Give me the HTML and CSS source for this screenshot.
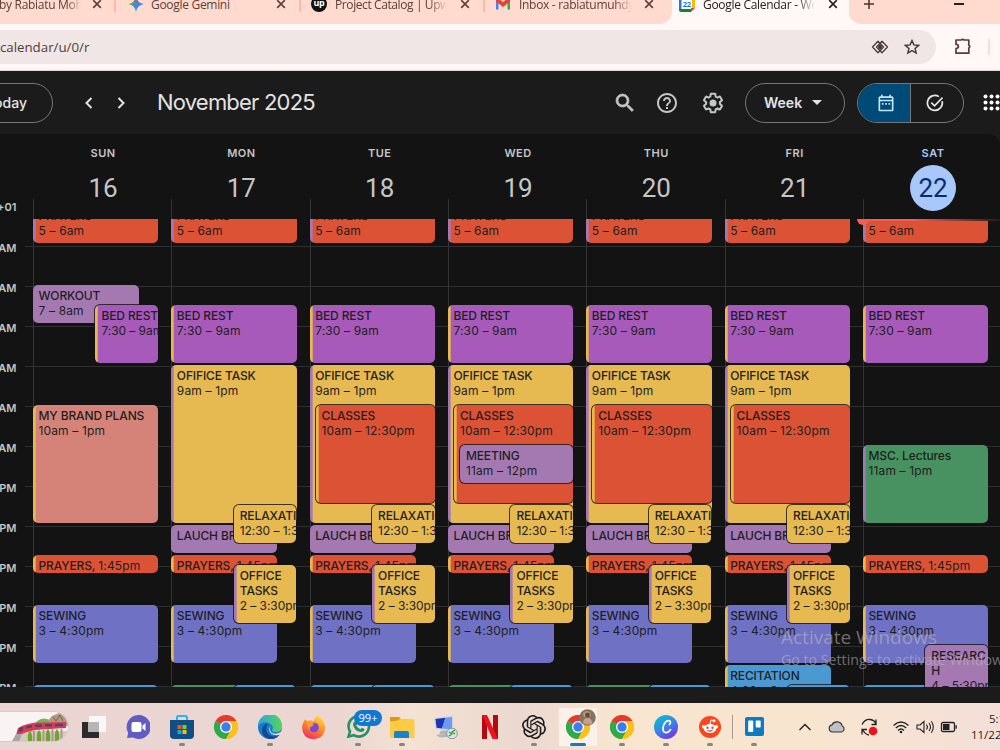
FILE: index.html
```html
<!DOCTYPE html>
<html lang="en">
<head>
<meta charset="utf-8">
<title>Google Calendar - Week of November 16, 2025</title>
<link rel="stylesheet" href="styles.css">
</head>
<body>
<svg width="0" height="0" class="defs">
  <symbol id="x" viewBox="0 0 10 10"><path d="M1.2 1.2l7.6 7.6M8.8 1.2L1.2 8.8" stroke="currentColor" stroke-width="1.7" fill="none"/></symbol>
  <symbol id="chrome" viewBox="0 0 24 24">
    <circle cx="12" cy="12" r="12" fill="#fbc116"/>
    <path d="M12 12L1.6 6A12 12 0 0 1 22.4 6z" fill="#e33b2e"/>
    <path d="M1.6 6A12 12 0 0 0 12 24l5-9.2L12 12z" fill="#2da94f"/>
    <path d="M12 6h10.4A12 12 0 0 1 12 24l5.2-9z" fill="#fbc116"/>
    <circle cx="12" cy="12" r="6" fill="#fff"/><circle cx="12" cy="12" r="4.7" fill="#3b7ded"/>
  </symbol>
</svg>
<div class="screen">
  <header class="tabs">
    <div class="tab t1"><span class="tt">by Rabiatu Moham</span><svg class="close"><use href="#x"/></svg></div>
    <div class="tab t2"><svg class="fav" viewBox="0 0 16 16"><defs><linearGradient id="gm" x1="0" y1=".2" x2="1" y2=".6"><stop offset="0" stop-color="#f7c32e"/><stop offset=".3" stop-color="#4cae66"/><stop offset=".55" stop-color="#3b86f6"/><stop offset="1" stop-color="#3b86f6"/></linearGradient></defs><path d="M8 0Q9 7 16 8Q9 9 8 16Q7 9 0 8Q7 7 8 0z" fill="url(#gm)"/><path d="M8 0Q8.600 4.800 10.500 6L5.500 6Q7.400 4.800 8 0z" fill="#ea4a3c"/></svg><span class="tt">Google Gemini</span><svg class="close"><use href="#x"/></svg></div>
    <div class="tab t3"><span class="up">up</span><span class="tt">Project Catalog | Upwork</span><svg class="close"><use href="#x"/></svg></div>
    <div class="tab t4"><svg class="fav" viewBox="0 0 16 16"><path d="M1 13.500V3.500L3.500 4V13.500z" fill="#4285f4"/><path d="M12.500 13.500V4L15 3.500V13.500z" fill="#34a853"/><path d="M1 3.500Q2 1.500 4 3L8 6L12 3Q14 1.500 15 3.500V5.500L8 11L1 5.500z" fill="#ea4335"/></svg><span class="tt">Inbox - rabiatumuhdy@</span><svg class="close"><use href="#x"/></svg></div>
    <div class="tab t5"><svg class="fav" viewBox="0 0 16 16"><path d="M0 0h16v16H0z" fill="#fff"/><path d="M0 0h13v3H0zM0 3h2.500v10H0z" fill="#2b72e8"/><path d="M13 0h3v12h-3z" fill="#fbbc04"/><path d="M0 13h12v3H2Q0 16 0 14z" fill="#188038"/><path d="M12 12h4l-4 4z" fill="#ea4335"/><text x="7.800" y="11.200" class="favn">22</text></svg><span class="tt">Google Calendar - Week</span><svg class="close"><use href="#x"/></svg></div>
    <div class="tabend"><svg width="12" height="12" viewBox="0 0 12 12"><path d="M6 1v10M1 6h10" stroke="#49322c" stroke-width="1.500"/></svg><i></i></div>
  </header>
  <div class="bar">
    <div class="omni"><span>/calendar/u/0/r</span>
      <svg width="18" height="14" viewBox="0 0 18 14"><g fill="none" stroke="#4a3b38" stroke-width="1.300" stroke-linejoin="round"><path d="M7 1.200L1.500 7L7 12.800L12.500 7z"/><path d="M11 1.200L5.500 7L11 12.800L16.500 7z"/></g><path d="M9 4L11.500 7L9 10L6.500 7z" fill="#4a3b38"/></svg>
      <svg width="16" height="16" viewBox="0 0 16 16"><path d="M8 1.600l1.900 4.300 4.700.5-3.500 3.100 1 4.600L8 11.700l-4.100 2.400 1-4.600L1.400 6.400l4.700-.5z" fill="none" stroke="#4a3b38" stroke-width="1.500"/></svg>
    </div>
    <svg class="ext" width="18" height="18" viewBox="0 0 18 18"><path d="M2 3h5.200a1.600 1.400 0 0 1 2.800 0h4.800v5.200a1.500 1.500 0 0 1 0 2.800v5.200H2v-4.700q2.400-.3 2.400-2.100T2 7.400z" fill="none" stroke="#5a3a33" stroke-width="1.700" stroke-linejoin="round"/></svg>
    <i class="vline"></i>
  </div>
  <div class="app">
    <div class="apphead">
      <div class="pill today">Today</div>
      <svg class="nav n1" width="10" height="14" viewBox="0 0 10 14"><path d="M7.500 2L2.500 7l5 5" /></svg>
      <svg class="nav n2" width="10" height="14" viewBox="0 0 10 14"><path d="M2.500 2l5 5l-5 5"/></svg>
      <h1>November 2025</h1>
      <svg class="ic i1" viewBox="0 0 24 24"><path d="M15.500 14h-.790l-.280-.270A6.471 6.471 0 0 0 16 9.500 6.500 6.500 0 1 0 9.500 16c1.610 0 3.090-.590 4.230-1.570l.270.280v.790l5 4.990L20.490 19l-4.990-5zm-6 0C7.010 14 5 11.990 5 9.500S7.010 5 9.500 5 14 7.010 14 9.500 11.990 14 9.500 14z"/></svg>
      <svg class="ic i2" viewBox="0 0 24 24"><path d="M11 18h2v-2h-2v2zm1-16C6.480 2 2 6.480 2 12s4.480 10 10 10 10-4.480 10-10S17.520 2 12 2zm0 18c-4.410 0-8-3.590-8-8s3.590-8 8-8 8 3.590 8 8-3.590 8-8 8zm0-14c-2.210 0-4 1.790-4 4h2c0-1.100.9-2 2-2s2 .9 2 2c0 2-3 1.750-3 5h2c0-2.250 3-2.500 3-5 0-2.210-1.790-4-4-4z"/></svg>
      <svg class="ic i3" viewBox="0 0 24 24"><path d="M13.850 22.250h-3.700c-.740 0-1.360-.540-1.450-1.270l-.270-1.890c-.270-.140-.530-.290-.790-.460l-1.800.720c-.7.260-1.470-.030-1.810-.650L2.200 15.530c-.350-.660-.200-1.440.360-1.880l1.530-1.190c-.010-.150-.020-.300-.020-.460 0-.150.010-.310.020-.460l-1.520-1.190c-.590-.450-.740-1.260-.370-1.880l1.850-3.190c.340-.620 1.110-.9 1.790-.630l1.810.730c.260-.170.520-.320.780-.460l.270-1.910c.090-.7.710-1.250 1.440-1.250h3.700c.740 0 1.360.540 1.450 1.270l.270 1.890c.270.140.530.290.790.460l1.800-.720c.710-.260 1.480.030 1.820.650l1.840 3.180c.360.660.200 1.440-.360 1.880l-1.520 1.190c.010.150.020.300.020.460s-.010.310-.020.460l1.520 1.190c.560.450.720 1.230.370 1.860l-1.860 3.220c-.340.620-1.110.9-1.800.630l-1.800-.720c-.260.170-.520.320-.780.460l-.270 1.910c-.100.680-.720 1.220-1.460 1.220zm-3.230-2h2.760l.370-2.550.530-.220c.440-.180.880-.440 1.340-.780l.450-.340 2.380.960 1.380-2.400-2.030-1.580.070-.560c.030-.260.060-.510.060-.780s-.030-.530-.060-.780l-.070-.560 2.030-1.580-1.390-2.400-2.390.960-.450-.350c-.420-.320-.870-.580-1.330-.770l-.520-.220-.370-2.550h-2.760l-.370 2.550-.530.210c-.440.190-.880.440-1.340.790l-.450.330-2.380-.950-1.390 2.390 2.030 1.580-.070.560a7 7 0 0 0-.060.790c0 .260.020.530.060.780l.070.560-2.030 1.580 1.380 2.400 2.390-.960.450.350c.430.330.860.580 1.330.770l.530.220z"/><circle cx="12" cy="12" r="3.500"/></svg>
      <div class="pill week">Week<i></i></div>
      <div class="pill modes">
        <div class="m on"><svg width="20" height="20" viewBox="0 0 24 24" fill="#c2e7ff"><path d="M19 4h-1V2h-2v2H8V2H6v2H5c-1.110 0-2 .9-2 2v14c0 1.100.890 2 2 2h14c1.100 0 2-.9 2-2V6c0-1.100-.9-2-2-2zm0 16H5V10h14v10zm0-12H5V6h14v2zM7 12h2v2H7zm4 0h2v2h-2zm4 0h2v2h-2z"/></svg></div>
        <div class="m"><svg width="20" height="20" viewBox="0 0 24 24" fill="none" stroke="#e3e3e3" stroke-width="2"><path d="M20.600 9.800A9 9 0 1 1 16.700 4.300M7.500 11.500l4 4L21 5.500"/></svg></div>
      </div>
      <svg class="apps" width="18" height="18" viewBox="0 0 18 18" fill="#fff"><g id="dr"><circle cx="2.500" cy="2.500" r="2"/><circle cx="8.500" cy="2.500" r="2"/><circle cx="14.500" cy="2.500" r="2"/></g><use href="#dr" y="6"/><use href="#dr" y="12"/></svg>
    </div>
    <div class="cal">
      <div class="days">
        <div class="gmt"><span>GMT+01</span></div>
        <div class="day"><b>SUN</b><em>16</em></div><div class="day"><b>MON</b><em>17</em></div><div class="day"><b>TUE</b><em>18</em></div><div class="day"><b>WED</b><em>19</em></div><div class="day"><b>THU</b><em>20</em></div><div class="day"><b>FRI</b><em>21</em></div><div class="day now"><b>SAT</b><em>22</em></div>
      </div>
      <div class="scroll">
        <div class="hours"><span>6 AM</span><span>7 AM</span><span>8 AM</span><span>9 AM</span><span>10 AM</span><span>11 AM</span><span>12 PM</span><span>1 PM</span><span>2 PM</span><span>3 PM</span><span>4 PM</span><span>5 PM</span></div>
        <div class="col">
          <div class="ev or bp" style="--s:1;--n:4"><b>PRAYERS</b><span>5 – 6am</span></div>
          <div class="ev lp w85" style="--s:9;--n:4"><b>WORKOUT</b><span>7 – 8am</span></div>
          <div class="ev pu by half" style="--s:11;--n:6"><b>BED REST</b><span>7:30 – 9am</span></div>
          <div class="ev sa by" style="--s:21;--n:12"><b>MY BRAND PLANS</b><span>10am – 1pm</span></div>
          <div class="ev or by" style="--s:36;--n:2"><b>PRAYERS, <span>1:45pm</span></b></div>
          <div class="ev vi by" style="--s:41;--n:6"><b>SEWING</b><span>3 – 4:30pm</span></div>
          <div class="ev bl" style="--s:49;--n:4"></div>
        </div>
        <div class="col">
          <div class="ev or bp" style="--s:1;--n:4"><b>PRAYERS</b><span>5 – 6am</span></div>
          <div class="ev pu by" style="--s:11;--n:6"><b>BED REST</b><span>7:30 – 9am</span></div>
          <div class="ev ye bp" style="--s:17;--n:16"><b>OFIFICE TASK</b><span>9am – 1pm</span></div>
          <div class="ev lp w85" style="--s:33;--n:3"><b>LAUCH BREAK</b></div>
          <div class="ev ye half" style="--s:31;--n:4"><b>RELAXATION</b><span>12:30 – 1:30pm</span></div>
          <div class="ev or by w85" style="--s:36;--n:2"><b>PRAYERS, <span>1:45pm</span></b></div>
          <div class="ev vi by w85" style="--s:41;--n:6"><b>SEWING</b><span>3 – 4:30pm</span></div>
          <div class="ev ye bp half" style="--s:37;--n:6"><b>OFFICE<br>TASKS</b><span>2 – 3:30pm</span></div>
          <div class="ev gr w85" style="--s:49;--n:4"></div><div class="ev bl half" style="--s:49;--n:4"></div>
        </div>
        <div class="col">
          <div class="ev or bp" style="--s:1;--n:4"><b>PRAYERS</b><span>5 – 6am</span></div>
          <div class="ev pu by" style="--s:11;--n:6"><b>BED REST</b><span>7:30 – 9am</span></div>
          <div class="ev ye bp" style="--s:17;--n:16"><b>OFIFICE TASK</b><span>9am – 1pm</span></div>
          <div class="ev or by in1" style="--s:21;--n:10"><b>CLASSES</b><span>10am – 12:30pm</span></div>
          <div class="ev lp w85" style="--s:33;--n:3"><b>LAUCH BREAK</b></div>
          <div class="ev ye half" style="--s:31;--n:4"><b>RELAXATION</b><span>12:30 – 1:30pm</span></div>
          <div class="ev or by w85" style="--s:36;--n:2"><b>PRAYERS, <span>1:45pm</span></b></div>
          <div class="ev vi by w85" style="--s:41;--n:6"><b>SEWING</b><span>3 – 4:30pm</span></div>
          <div class="ev ye bp half" style="--s:37;--n:6"><b>OFFICE<br>TASKS</b><span>2 – 3:30pm</span></div>
          <div class="ev bl w85" style="--s:49;--n:4"></div><div class="ev bl half" style="--s:49;--n:4"></div>
        </div>
        <div class="col">
          <div class="ev or bp" style="--s:1;--n:4"><b>PRAYERS</b><span>5 – 6am</span></div>
          <div class="ev pu by" style="--s:11;--n:6"><b>BED REST</b><span>7:30 – 9am</span></div>
          <div class="ev ye bp" style="--s:17;--n:16"><b>OFIFICE TASK</b><span>9am – 1pm</span></div>
          <div class="ev or by in1" style="--s:21;--n:10"><b>CLASSES</b><span>10am – 12:30pm</span></div>
          <div class="ev lp in2" style="--s:25;--n:4"><b>MEETING</b><span>11am – 12pm</span></div>
          <div class="ev lp w85" style="--s:33;--n:3"><b>LAUCH BREAK</b></div>
          <div class="ev ye half" style="--s:31;--n:4"><b>RELAXATION</b><span>12:30 – 1:30pm</span></div>
          <div class="ev or by w85" style="--s:36;--n:2"><b>PRAYERS, <span>1:45pm</span></b></div>
          <div class="ev vi by w85" style="--s:41;--n:6"><b>SEWING</b><span>3 – 4:30pm</span></div>
          <div class="ev ye bp half" style="--s:37;--n:6"><b>OFFICE<br>TASKS</b><span>2 – 3:30pm</span></div>
          <div class="ev gr w85" style="--s:49;--n:4"></div><div class="ev bl half" style="--s:49;--n:4"></div>
        </div>
        <div class="col">
          <div class="ev or bp" style="--s:1;--n:4"><b>PRAYERS</b><span>5 – 6am</span></div>
          <div class="ev pu by" style="--s:11;--n:6"><b>BED REST</b><span>7:30 – 9am</span></div>
          <div class="ev ye bp" style="--s:17;--n:16"><b>OFIFICE TASK</b><span>9am – 1pm</span></div>
          <div class="ev or by in1" style="--s:21;--n:10"><b>CLASSES</b><span>10am – 12:30pm</span></div>
          <div class="ev lp w85" style="--s:33;--n:3"><b>LAUCH BREAK</b></div>
          <div class="ev ye half" style="--s:31;--n:4"><b>RELAXATION</b><span>12:30 – 1:30pm</span></div>
          <div class="ev or by w85" style="--s:36;--n:2"><b>PRAYERS, <span>1:45pm</span></b></div>
          <div class="ev vi by w85" style="--s:41;--n:6"><b>SEWING</b><span>3 – 4:30pm</span></div>
          <div class="ev ye bp half" style="--s:37;--n:6"><b>OFFICE<br>TASKS</b><span>2 – 3:30pm</span></div>
          <div class="ev gr w85" style="--s:49;--n:4"></div><div class="ev bl half" style="--s:49;--n:4"></div>
        </div>
        <div class="col">
          <div class="ev or bp" style="--s:1;--n:4"><b>PRAYERS</b><span>5 – 6am</span></div>
          <div class="ev pu by" style="--s:11;--n:6"><b>BED REST</b><span>7:30 – 9am</span></div>
          <div class="ev ye bp" style="--s:17;--n:16"><b>OFIFICE TASK</b><span>9am – 1pm</span></div>
          <div class="ev or by in1" style="--s:21;--n:10"><b>CLASSES</b><span>10am – 12:30pm</span></div>
          <div class="ev lp w85" style="--s:33;--n:3"><b>LAUCH BREAK</b></div>
          <div class="ev ye half" style="--s:31;--n:4"><b>RELAXATION</b><span>12:30 – 1:30pm</span></div>
          <div class="ev or by w85" style="--s:36;--n:2"><b>PRAYERS, <span>1:45pm</span></b></div>
          <div class="ev vi by w85" style="--s:41;--n:6"><b>SEWING</b><span>3 – 4:30pm</span></div>
          <div class="ev ye bp half" style="--s:37;--n:6"><b>OFFICE<br>TASKS</b><span>2 – 3:30pm</span></div>
          <div class="ev bl by w85" style="--s:47;--n:6"><b>RECITATION</b><span>4:30 – 6pm</span></div><div class="ev bl half" style="--s:49;--n:4"></div>
        </div>
        <div class="col">
          <div class="ev or bp" style="--s:1;--n:4"><b>PRAYERS</b><span>5 – 6am</span></div>
          <div class="ev pu by" style="--s:11;--n:6"><b>BED REST</b><span>7:30 – 9am</span></div>
          <div class="ev gr bp" style="--s:25;--n:8"><b>MSC. Lectures</b><span>11am – 1pm</span></div>
          <div class="ev or by" style="--s:36;--n:2"><b>PRAYERS, <span>1:45pm</span></b></div>
          <div class="ev vi by" style="--s:41;--n:6"><b>SEWING</b><span>3 – 4:30pm</span></div>
          <div class="ev bl w85" style="--s:49;--n:4"></div>
          <div class="ev lp half" style="--s:45;--n:6"><b>RESEARC<br>H</b><span>4 – 5:30pm</span></div>
          <i class="nowline"></i><i class="nowdot"></i>
        </div>
      </div>
    </div>
  </div>
  <footer class="task">
    <div class="search"><svg width="56" height="30" viewBox="0 0 56 30">
      <path d="M21 14Q28 3 38 8L36 16z" fill="#77b255"/><path d="M36 9l4-5 7-3 6 3 4 10H36z" fill="#b09a82"/><path d="M41 5l3 4 4-6 3 6" stroke="#75604d" fill="none"/>
      <path d="M8 19h48v11H6z" fill="#d5cabb"/><path d="M16 30q-1-9 2-11q3 3 2 11zM25 30q-1-10 2-12q3 3 2 12zM34 30q-1-11 2-13q3 3 2 13zM43 30q-1-11 2-13q3 3 2 13z" fill="#6fa52f"/><path d="M22 19v11M31.500 18v12M40.500 17v13M49.500 17v13" stroke="#a89a8a" stroke-width="2"/>
      <path d="M4 23l2-7Q16 10 30 10.500L54 10v6L30 17.500Q18 18 10 22z" fill="#d93a55"/><path d="M6 20l1.500-4 4-1-1 4zM14 14l6-1v2.500l-6 1zM23 12.500h7v2.500h-7zM33 12h7v2.500h-7zM43 11.700h8v2.500h-8z" fill="#554466"/><path d="M0 29l4-7 6 0-3 8z" fill="#a6a6aa"/>
    </svg></div>
    <div class="dock">
      <div class="app-i"><svg width="26" height="26" viewBox="0 0 26 26"><path d="M8 2h17v16H8z" fill="#f8f8f8"/><path d="M1 8h17v16H1z" fill="#2b2b2b"/><path d="M7 8h11v10H7z" fill="#b7b5b5"/></svg></div>
      <div class="app-i"><svg width="24" height="24" viewBox="0 0 24 24"><path d="M12 0a12 12 0 1 1-5 22.500L1 23l1.200-5A12 12 0 0 1 12 0z" fill="#625bc3"/><rect x="5.500" y="7" width="10" height="10" rx="2" fill="#fff"/><path d="M16.500 10.500L19.500 8v8l-3-2.500z" fill="#fff"/></svg></div>
      <div class="app-i run"><svg width="24" height="24" viewBox="0 0 24 24"><path d="M7 6V2.500Q7 1 8.500 1h7Q17 1 17 2.500V6" fill="none" stroke="#27b5ef" stroke-width="2"/><path d="M0 5h24v15q0 4-4 4H4q-4 0-4-4z" fill="#124d83"/><path d="M7.500 10h4v4h-4z" fill="#f1511b"/><path d="M12.500 10h4v4h-4z" fill="#80cc28"/><path d="M7.500 15h4v4h-4z" fill="#00adef"/><path d="M12.500 15h4v4h-4z" fill="#fbbc09"/></svg></div>
      <div class="app-i"><svg width="24" height="24"><use href="#chrome"/></svg></div>
      <div class="app-i run"><svg width="24" height="24" viewBox="0 0 24 24"><defs><linearGradient id="eg" x1="0" x2="1" y1=".3" y2=".3"><stop offset="0" stop-color="#2aa5e0"/><stop offset="1" stop-color="#58d457"/></linearGradient></defs><circle cx="12" cy="12" r="12" fill="#1a78cf"/><path d="M0 11A12 12 0 0 1 24 11Q24.500 17 18 17Q13.500 17 14.200 14.500Q16 12 13 9.500Q8 5.500 2 9z" fill="url(#eg)"/><path d="M8.500 12Q7 20 15.500 21.500Q19 21.500 22 19Q18 25 11 24Q4 22 4 15Q4.500 9 10 8.500Q8.800 9.500 8.500 12z" fill="#114a91"/><path d="M12.500 11Q10.500 17 16 18.500Q20 19.300 24.500 16L23 19.500Q17 21.500 13 18.500Q9.500 14.500 12.500 11z" fill="#e9d8d6"/></svg></div>
      <div class="app-i"><svg width="24" height="24" viewBox="0 0 24 24"><defs><linearGradient id="ff" x1=".8" y1="0" x2=".3" y2="1"><stop offset="0" stop-color="#ffe64a"/><stop offset=".5" stop-color="#ff8a25"/><stop offset="1" stop-color="#f22d62"/></linearGradient></defs><path d="M16 0q6 5 7 11q.5 8-5 11.500q-7 3-13 0Q-1 18 .5 9.500L3 4l2.500 2.500Q8 4 11 6.500q2-4 5-6.500z" fill="url(#ff)"/><circle cx="12" cy="12.500" r="4.800" fill="#7949dc"/><path d="M5 8q5-1 7 1l-2 2.500q-3 0-2 3.500q-4-2-3-7z" fill="#ff982d"/></svg></div>
      <div class="app-i run"><svg width="26" height="26" viewBox="0 0 26 26"><path d="M3.500 22.500l1.500-5A10.200 10.200 0 1 1 8.800 21.200z" fill="none" stroke="#229266" stroke-width="2.600"/><path d="M9 8q1.500-2 2.500 0l.8 2-1 1.500q1.500 2.800 4.200 3.800l1.400-1.500 2.600 1.300q0 3-3.500 3Q9 17 8 10.500 8 9 9 8z" fill="#229266"/></svg><span class="badge">99+</span></div>
      <div class="app-i run"><svg width="25" height="24" viewBox="0 0 25 24"><path d="M0 2h9l2 2v4H0z" fill="#d99a10"/><path d="M0 6q6 1 10-2h12q2.500 0 2.500 2v17H0z" fill="#fbcb45"/><path d="M4 23v-5q0-2 2-2h11q2 0 2 2v5z" fill="#1784ca"/></svg></div>
      <div class="app-i"><svg width="24" height="24" viewBox="0 0 24 24"><path d="M0 3l19-2.500v15L2 14z" fill="#cfd4dc"/><path d="M1.500 4l10-1.300L8 13.500l-5.500-.8z" fill="#1a35b8"/><path d="M11.500 2.700l6.500-.7v12.500l-10-1z" fill="#6f9af3"/><path d="M7 15.500h6l1 3.500H5zM2 20l14-1.500 2 3-12 1z" fill="#aeb4bb"/><circle cx="18" cy="18.500" r="5.300" fill="#dfe3e4" stroke="#8c9497"/><path d="M15 17l3 2-3 2m6-6l-3 2 3 2" stroke="#2c9e3f" stroke-width="1.300" fill="none"/></svg></div>
      <div class="app-i"><svg width="16" height="24" viewBox="0 0 16 24"><path d="M0 0h5v24H0zM11 0h5v24h-5z" fill="#b00a12"/><path d="M0 0h5l11 24h-5.500z" fill="#e9141d"/></svg></div>
      <div class="app-i run"><svg width="24" height="24" viewBox="0 0 24 24"><path fill="#1b1b1b" d="M22.282 9.821a5.985 5.985 0 0 0-.516-4.910 6.046 6.046 0 0 0-6.510-2.900A6.065 6.065 0 0 0 4.981 4.180a5.985 5.985 0 0 0-3.998 2.900 6.046 6.046 0 0 0 .743 7.097 5.980 5.980 0 0 0 .510 4.911 6.051 6.051 0 0 0 6.515 2.900A5.985 5.985 0 0 0 13.260 24a6.056 6.056 0 0 0 5.772-4.206 5.990 5.990 0 0 0 3.997-2.900 6.056 6.056 0 0 0-.747-7.073zM13.260 22.430a4.476 4.476 0 0 1-2.876-1.040l.141-.081 4.779-2.758a.795.795 0 0 0 .392-.681v-6.737l2.020 1.168a.071.071 0 0 1 .038.052v5.583a4.504 4.504 0 0 1-4.494 4.494zM3.600 18.304a4.470 4.470 0 0 1-.535-3.014l.142.085 4.783 2.759a.771.771 0 0 0 .780 0l5.843-3.369v2.332a.080.080 0 0 1-.033.062L9.740 19.950a4.500 4.500 0 0 1-6.140-1.646zM2.340 7.896a4.485 4.485 0 0 1 2.366-1.973V11.600a.766.766 0 0 0 .388.677l5.815 3.354-2.020 1.168a.076.076 0 0 1-.071 0l-4.830-2.786A4.504 4.504 0 0 1 2.340 7.872zm16.597 3.855l-5.833-3.387L15.119 7.200a.076.076 0 0 1 .071 0l4.830 2.791a4.494 4.494 0 0 1-.676 8.105v-5.678a.790.790 0 0 0-.407-.667zm2.010-3.023l-.141-.085-4.774-2.782a.776.776 0 0 0-.785 0L9.409 9.230V6.897a.066.066 0 0 1 .028-.061l4.830-2.787a4.500 4.500 0 0 1 6.680 4.660zm-12.640 4.135l-2.020-1.164a.080.080 0 0 1-.038-.057V6.075a4.500 4.500 0 0 1 7.375-3.453l-.142.080L8.704 5.460a.795.795 0 0 0-.393.681zm1.097-2.365l2.602-1.500 2.607 1.500v2.999l-2.597 1.500-2.607-1.500z"/></svg></div>
      <div class="app-i run active"><svg width="24" height="24"><use href="#chrome"/></svg><svg class="ava" width="17" height="17" viewBox="0 0 17 17"><circle cx="8.500" cy="8.500" r="8.300" fill="#857361"/><path d="M4 4l3-2 4 1 1 4-7 1z" fill="#b99a79"/><circle cx="8.500" cy="6" r="2.400" fill="#6b4a38"/><path d="M4 14q.5-5 4.500-5t5 5q-4 3-9.500 0z" fill="#c7a08c"/></svg></div>
      <div class="app-i run"><svg width="24" height="24"><use href="#chrome"/></svg></div>
      <div class="app-i run"><svg width="24" height="24" viewBox="0 0 24 24"><defs><linearGradient id="cv" x1=".2" y1="0" x2=".8" y2="1"><stop offset="0" stop-color="#08bfd0"/><stop offset=".5" stop-color="#3b83e8"/><stop offset="1" stop-color="#7a2be8"/></linearGradient></defs><circle cx="12" cy="12" r="12" fill="url(#cv)"/><path d="M15.500 9.500q2-2.500 0-3.700q-3-1-5.300 3.200q-2.700 6 .3 8.300q3 1.300 6-2.600" fill="none" stroke="#fff" stroke-width="1.700" stroke-linecap="round"/></svg></div>
      <div class="app-i run"><svg width="22" height="22" viewBox="0 0 22 22"><circle cx="11" cy="11" r="11" fill="#fc471e"/><g fill="#fff"><ellipse cx="11" cy="12.500" rx="6.300" ry="4.600"/><circle cx="4.600" cy="10.800" r="1.700"/><circle cx="17.400" cy="10.800" r="1.700"/><circle cx="15" cy="4.800" r="1.500"/></g><path d="M11 8l1-4 3 .7" fill="none" stroke="#fff"/><circle cx="8.500" cy="11.700" r="1.200" fill="#fc471e"/><circle cx="13.500" cy="11.700" r="1.200" fill="#fc471e"/><path d="M8.500 14.500q2.500 1.500 5 0" fill="none" stroke="#8e2c17"/></svg></div>
      <div class="app-i run sep"><svg width="19" height="19" viewBox="0 0 19 19"><rect width="19" height="19" rx="2" fill="#0b7bc4"/><rect x="3.200" y="3.500" width="5" height="11.500" rx=".8" fill="#fff"/><rect x="10.700" y="3.500" width="5" height="7" rx=".8" fill="#fff"/></svg></div>
    </div>
    <div class="tray">
      <svg width="32" height="20" viewBox="0 0 32 20"><path d="M10.500 13l5.500-5.500 5.500 5.500" fill="none" stroke="#222" stroke-width="1.400"/></svg>
      <svg width="32" height="20" viewBox="0 0 32 20"><path d="M11.500 15a3.600 3.600 0 0 1-.5-7.100 5.500 5.500 0 0 1 10.200 1 3.200 3.200 0 0 1-.7 6.100z" fill="#bcc2c8" stroke="#333" stroke-width="1.100"/></svg>
      <svg width="32" height="20" viewBox="0 0 32 20"><path d="M9 7.500q3-5.500 8-5t6 5M18.500 7.500h4.500V2.500M9 17.500v-5h5M9.500 12.500q2.500 5 6.500 5.500" fill="none" stroke="#222" stroke-width="1.300"/><circle cx="20" cy="14" r="4.300" fill="#f01018"/></svg>
      <svg width="32" height="20" viewBox="0 0 28 20"><g fill="none" stroke="#222" stroke-width="1.300"><path d="M6.500 8.500q7.500-7 15 0M8.800 11q5.200-5 10.400 0M11 13.500q3-3 6 0"/></g><circle cx="14" cy="15" r="1.300" fill="#222"/></svg>
      <svg class="spk" width="22" height="20" viewBox="0 0 22 20"><path d="M3 8h3l4-3.500v11L6 12H3zM12.500 7.500q1.800 2.500 0 5M15 6q3 4 0 8M17.300 4.300q4 5.500 0 11.500" fill="none" stroke="#222" stroke-width="1.100"/></svg>
      <svg width="26" height="20" viewBox="0 0 26 20"><rect x="5.500" y="5.500" width="13" height="9" rx="1.500" fill="none" stroke="#222" stroke-width="1.300"/><path d="M7 7h6.500v6H7zM19.500 8.300h1.300v3.400h-1.300z" fill="#222"/></svg>
      <div class="clock"><span>5:15 PM</span><span>11/22/2025</span></div>
    </div>
  </footer>
  <div class="wm"><p>Activate Windows</p><small>Go to Settings to activate Windows.</small></div>
</div>
</body>
</html>
```
FILE: styles.css
```css
* { box-sizing: border-box; }
body { margin: 0; background: #1b1b1b; font-family: Inter, "Liberation Sans", sans-serif; }
svg { display: block; flex: none; }
.defs { position: absolute; }
.screen { position: relative; width: 1000px; height: 750px; overflow: hidden; display: flex; flex-direction: column; }

/* browser chrome */
.tabs { height: 24px; flex: none; display: flex; background: #fff8f6; font: 12px "Open Sans", "Noto Sans", sans-serif; letter-spacing: -.3px; color: #5d4039; overflow: hidden; }
.tab { height: 24px; flex: none; display: flex; align-items: flex-start; background: #ffdacf; position: relative; }
.tt { flex: 1; height: 18px; line-height: 18px; margin-top: -4px; white-space: nowrap; overflow: hidden; -webkit-mask-image: linear-gradient(90deg, #000 84%, transparent); mask-image: linear-gradient(90deg, #000 84%, transparent); }
.close { width: 10px; height: 10px; margin-top: -1px; }
.fav { width: 16px; height: 16px; margin-top: -4px; }
.favn { font: bold 7.500px "Open Sans", sans-serif; fill: #1a73e8; text-anchor: middle; }
.t1 { width: 116px; }
.t1 .tt { flex: none; width: 82px; margin-right: 11px; margin-left: -1px; }
.t2 { width: 185px; padding: 0 15px 0 12px; }
.t3 { width: 184px; padding: 0 15px 0 10px; }
.t4 { width: 187px; padding: 0 18px 0 10px; border-bottom-right-radius: 12px; }
.t5 { width: 177px; padding: 0 11px 0 7px; background: #fff8f6; color: #28201e; }
.t1::after, .t2::after, .t3::after { content: ""; position: absolute; right: 0; top: 0; width: 2px; height: 12px; background: #ffb9a5; }
.t2 .tt { margin-left: 7px; -webkit-mask-image: none; mask-image: none; }
.t3 .tt { margin: -4px 13px 0 8px; letter-spacing: -.4px; }
.t4 .tt { margin: -4px 12px 0 8px; }
.t5 .tt { margin: -4px 13px 0 8px; }
.up { width: 16px; height: 16px; margin-top: -4px; border-radius: 50%; background: #111; color: #fff; font: bold 9px/13px "Open Sans", sans-serif; text-align: center; }
.tabend { flex: 1; background: #ffdacf; border-bottom-left-radius: 12px; display: flex; padding: 0 36px 0 14px; justify-content: space-between; }
.tabend svg { margin-top: -2px; }
.tabend i { width: 10px; height: 1.500px; background: #28201e; margin-top: 3px; }
.bar { height: 47px; flex: none; background: #fff8f6; border-bottom: 1px solid #e5d5cb; display: flex; align-items: flex-start; padding-top: 6px; }
.omni { width: 936px; height: 34px; background: #f1e6e6; border-radius: 0 17px 17px 0; display: flex; align-items: center; font: 13.300px "Open Sans", "Noto Sans", sans-serif; color: #4b3f3c; padding-right: 16px; gap: 15px; }
.omni span { flex: 1; margin-left: -5px; }
.ext { margin: 7px 0 0 18px; }
.vline { width: 2px; height: 16px; margin: 9px 0 0 16px; background: #ffdacf; }

/* calendar app header */
.app { height: 632px; flex: none; background: #1b1b1b; }
.apphead { height: 63px; display: flex; align-items: center; color: #e3e3e3; overflow: hidden; }
.pill { height: 40px; border: 1px solid #747775; border-radius: 20px; display: flex; align-items: center; flex: none; font-size: 14px; font-weight: 600; }
.today { width: 93px; margin-left: -40px; padding-right: 25px; justify-content: flex-end; font-weight: 500; }
.nav { fill: none; stroke: #e3e3e3; stroke-width: 2; }
.n1 { margin-left: 31px; }
.n2 { margin-left: 22px; }
h1 { margin: -2px 0 0 31px; width: 160px; flex: none; font-size: 22px; font-weight: 400; letter-spacing: -.8px; white-space: nowrap; line-height: 28px; }
.ic { width: 24px; height: 24px; fill: #c4c7c5; }
.i1 { margin-left: 296px; stroke: #c4c7c5; stroke-width: .7; }
.i2 { margin-left: 18px; }
.i3 { margin-left: 22px; }
.week { width: 100px; margin-left: 20px; padding-left: 18px; }
.week i { border: 5px solid transparent; border-top-color: #e3e3e3; border-bottom: 0; margin-left: 10px; }
.modes { width: 107px; margin-left: 12px; overflow: hidden; }
.m { flex: 1; height: 100%; display: flex; align-items: center; justify-content: center; padding-right: 5px; }
.m.on { flex: 0 0 53px; background: #004a77; border-right: 1px solid #747775; padding: 0 0 0 4px; }
.apps { margin-left: 19px; }

/* week grid */
.cal { height: 553px; background: #131314; border-top-right-radius: 12px; overflow: hidden; }
.days { height: 85px; display: flex; }
.gmt { width: 32.900px; flex: none; padding: 66px 16.500px 0 0; display: flex; justify-content: flex-end; font-size: 11px; font-weight: 600; line-height: 14px; color: #c4c7c5; }
.day { width: 138.330px; flex: none; display: flex; flex-direction: column; align-items: center; padding: 12px 0 0 2px; background: linear-gradient(#333435, #333435) 0 65px / 1px 20px no-repeat; color: #c4c7c5; }
.day b { font-size: 11px; font-weight: 600; line-height: 14px; letter-spacing: .5px; }
.day em { width: 46px; height: 46px; margin-top: 5px; border-radius: 50%; font: 26px/46px Roboto, sans-serif; text-align: center; }
.now b { color: #a8c7fa; }
.now em { background: #a8c7fa; color: #062e6f; }
.scroll { height: 468px; overflow: hidden; display: flex; background: linear-gradient(#2e2f30 1px, transparent 1px) 25px 27px / 100% 40px repeat-y; }
.hours { width: 32.900px; flex: none; padding-top: 22px; display: flex; flex-direction: column; align-items: flex-end; font-size: 11px; font-weight: 600; color: #c4c7c5; }
.hours span { height: 40px; flex: none; line-height: 14px; white-space: nowrap; margin-right: 16.500px; }
.col { width: 138.330px; flex: none; position: relative; margin-top: -14px; height: 500px; display: grid; grid-template-columns: 124.500px; grid-auto-rows: 10px; border-left: 1px solid #333435; }
.ev { grid-column: 1; grid-row: var(--s) / span var(--n); margin: 0 0 2px -1px; border-radius: 5px; padding: 3px 0 0 5.600px; font-size: 12px; line-height: 15px; color: #1f1f1f; overflow: hidden; white-space: nowrap; }
.ev b { display: block; font-weight: 500; letter-spacing: -.12px; }
.ev span { font-weight: 400; letter-spacing: .15px; }
.by, .bp { background-size: 2.700px 100%; background-repeat: no-repeat; }
.by { background-image: linear-gradient(#e6b951, #e6b951); }
.bp { background-image: linear-gradient(#a479b1, #a479b1); }
.w85 { width: 106px; }
.half, .in1, .in2 { box-shadow: 0 0 0 1px rgba(19, 19, 20, .8); padding-left: 6px; }
.half { margin-left: 61.500px; width: 62.500px; }
.half span { letter-spacing: -.05px; }
.in1 { margin-left: 5px; }
.in2 { margin-left: 11px; }
.or { background-color: #db5235; }
.lp { background-color: #a479b1; }
.pu { background-color: #a75aba; }
.ye { background-color: #e6b951; }
.sa { background-color: #d58379; }
.vi { background-color: #6f71c4; }
.gr { background-color: #489160; }
.bl { background-color: #4b99d2; }
.nowline { position: absolute; left: 0; top: 13.500px; width: 138px; height: 2.500px; background: linear-gradient(90deg, #f65c55 35%, #5c2822 85%, #241716); }
.nowdot { position: absolute; left: -7px; top: 8px; width: 12px; height: 12px; border-radius: 50%; background: #f65c55; }

/* taskbar */
.task { height: 47px; flex: none; display: flex; align-items: center; background: linear-gradient(90deg, #ebd5d3 0, #ebd6d2 34%, #f4e2d2 41%, #ebd8d0 52%, #f9e6d0 62%, #f8e5d0 82%, #f3dfd8 100%); }
.search { width: 69px; height: 31px; flex: none; margin-right: 3px; background: #f9f4f3; border: 1px solid #dcc9c6; border-left: 0; border-radius: 0 16px 16px 0; display: flex; justify-content: flex-end; overflow: hidden; }
.dock { display: flex; flex: none; }
.app-i { width: 44px; height: 47px; flex: none; display: flex; align-items: center; justify-content: center; position: relative; }
.app-i.run::after { content: ""; position: absolute; left: 19px; bottom: 4px; width: 6px; height: 3px; border-radius: 2px; background: #8b8480; }
.app-i.active { background: linear-gradient(#faf2ea, #faf2ea) 3px 5px / 38px 38px no-repeat; }
.app-i.active::after { left: 14px; width: 16px; background: #1277cf; }
.ava { position: absolute; left: 23px; top: 6px; }
.badge { position: absolute; left: 18px; top: 7px; width: 28px; height: 16px; border-radius: 8px; background: #0f78d4; color: #fff; font: 11px/16px "Open Sans", sans-serif; text-align: center; }
.sep::before { content: ""; position: absolute; left: 0; top: 12px; width: 1px; height: 24px; background: #a59a90; }
.tray { display: flex; align-items: center; margin-left: 13px; flex: none; }
.spk { margin-left: -3px; }
.clock { width: 70px; display: flex; flex-direction: column; align-items: flex-end; font: 11.500px/16px "Open Sans", "Noto Sans", sans-serif; color: #222; white-space: nowrap; }

/* activation notice floating above the desktop */
.wm { position: absolute; left: 781px; top: 624px; white-space: nowrap; font-family: "Open Sans", "Noto Sans", sans-serif; color: rgba(190, 190, 190, .55); }
.wm p { margin: 0; font-size: 19px; line-height: 26px; }
.wm small { display: block; font-size: 14.200px; line-height: 20px; }
```
